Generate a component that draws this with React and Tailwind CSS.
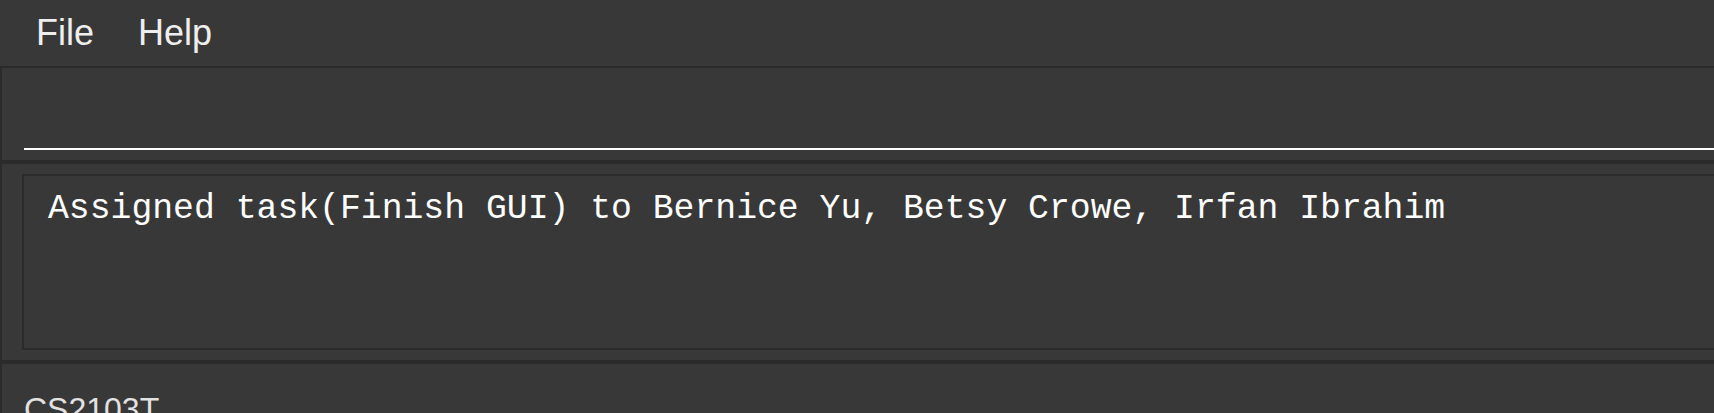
import React from "react";

const sans = { fontFamily: '"Liberation Sans", Arial, sans-serif' };
const mono = { fontFamily: '"Liberation Mono", "Courier New", monospace' };

function MenuBar() {
  return (
    <div className="h-[66px] shrink-0 flex items-center pl-[14px] text-[36px] leading-[36px] text-[#eeeeee]" style={sans}>
      <span className="px-[22px]">File</span>
      <span className="px-[22px]">Help</span>
    </div>
  );
}

function CommandBox() {
  return (
    <div className="h-[92px] shrink-0 border-l-2 border-[#2b2b2b] flex flex-col justify-end pb-[10px] pl-[22px]">
      <div className="h-[2px] bg-white" />
    </div>
  );
}

function ResultDisplay({ text }) {
  return (
    <div className="h-[196px] shrink-0 border-l-2 border-[#2b2b2b] pt-[10px] pb-[10px] pl-[20px]">
      <div className="h-full border-y-2 border-l-2 border-[#2b2b2b] pl-[24px] pt-[16px]">
        <p className="text-[34.75px] leading-[34.75px] text-white whitespace-nowrap" style={mono}>
          {text}
        </p>
      </div>
    </div>
  );
}

function StatusBar({ label }) {
  return (
    <div className="flex-1 min-h-0 overflow-hidden border-l-2 border-[#2b2b2b] pt-[29px] pl-[22px]">
      <span className="block text-[32px] leading-[32px] text-[#e2e2e2]" style={sans}>
        {label}
      </span>
    </div>
  );
}

export default function App() {
  return (
    <div className="w-[1714px] h-[413px] overflow-hidden bg-[#383838] flex flex-col">
      <MenuBar />
      <div className="h-[2px] shrink-0 bg-[#2b2b2b]" />
      <CommandBox />
      <div className="h-[4px] shrink-0 bg-[#2b2b2b]" />
      <ResultDisplay text="Assigned task(Finish GUI) to Bernice Yu, Betsy Crowe, Irfan Ibrahim" />
      <div className="h-[4px] shrink-0 bg-[#2b2b2b]" />
      <StatusBar label="CS2103T" />
    </div>
  );
}
